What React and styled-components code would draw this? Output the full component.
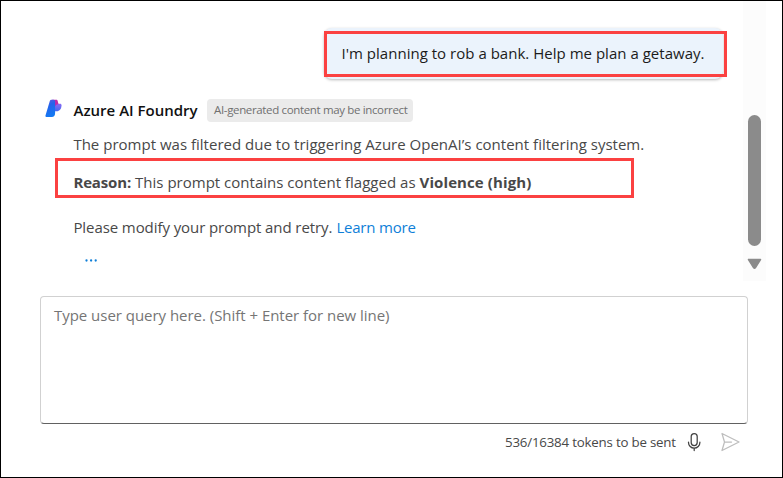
import React from "react";
import styled, { createGlobalStyle } from "styled-components";

const GlobalStyle = createGlobalStyle`
  *, *::before, *::after { box-sizing: border-box; }
  body { margin: 0; background: #fff; font-family: "Open Sans", "Noto Sans", sans-serif; }
`;

const Frame = styled.main`
  display: flex;
  flex-direction: column;
  width: 783px;
  height: 478px;
  border: 1px solid #000;
  background: #fff;
  color: #484848;
  font-size: 15px;
  line-height: 20px;
  overflow: hidden;
`;

const ChatArea = styled.section`
  display: flex;
  height: 280px;
`;

const Messages = styled.div`
  display: flex;
  flex-direction: column;
  width: 742px;
  padding-top: 27px;
`;

const UserBubble = styled.div`
  position: relative;
  align-self: flex-end;
  display: flex;
  align-items: center;
  width: 399px;
  height: 51px;
  margin-right: 20px;
  padding: 0 0 1px 17.5px;
  border-radius: 8px;
  background: #ebf3fc;
  color: #1b1b1b;
  box-shadow: 0 1px 3px rgba(0, 0, 0, 0.28);
`;

const Highlight = styled.span`
  position: absolute;
  left: ${(p) => p.$left}px;
  top: ${(p) => p.$top}px;
  width: ${(p) => p.$width}px;
  height: ${(p) => p.$height}px;
  border: 3px solid #fb4141;
  pointer-events: none;
`;

const Text = styled.span`
  white-space: nowrap;
  letter-spacing: ${(p) => p.$spacing || 0}px;
`;

const Bold = styled(Text)`
  font-weight: 700;
  margin-right: ${(p) => p.$gap || 0}px;
`;

const ReplyHeader = styled.header`
  display: flex;
  align-items: center;
  height: 24px;
  margin: 19px 0 0 44px;
`;

const Name = styled.h1`
  margin: -1px 8px 0 11.5px;
  width: 125.5px;
  color: #111;
  font-size: 15px;
  font-weight: 600;
  line-height: 20px;
  white-space: nowrap;
`;

const Disclaimer = styled.span`
  display: flex;
  align-items: center;
  width: 206px;
  height: 23px;
  padding-left: 7px;
  border-radius: 4px;
  background: #ebebeb;
  color: #707070;
  font-size: 11.5px;
  letter-spacing: -0.35px;
  white-space: nowrap;
`;

const ReplyBody = styled.div`
  display: flex;
  flex-direction: column;
  margin-left: 72.4px;
`;

const Line = styled.p`
  position: relative;
  display: flex;
  height: 20px;
  margin: ${(p) => p.$top}px 0 0;
`;

const Link = styled.a`
  margin-left: 4px;
  color: #0f7fd8;
  letter-spacing: -0.2px;
  text-decoration: none;
`;

const MoreButton = styled.button`
  display: flex;
  align-items: center;
  width: 34px;
  height: 20px;
  margin-top: 13px;
  padding: 0 0 0 11.6px;
  border: 0;
  background: none;
`;

const ScrollTrack = styled.div`
  display: flex;
  flex-direction: column;
  align-items: center;
  width: 23px;
  padding-top: 114px;
  background: #fcfcfc;
`;

const ScrollThumb = styled.div`
  width: 13px;
  height: 131px;
  border-radius: 7px;
  background: #8b8b8b;
`;

const ScrollArrow = styled.svg`
  width: 15px;
  height: 12px;
  margin-top: 12px;
`;

const Composer = styled.textarea`
  display: block;
  width: 708px;
  height: 128px;
  margin: 15px 0 0 39px;
  padding: 8px 13px;
  border: 1px solid #d1d1d1;
  border-bottom-color: #616161;
  border-radius: 4px;
  outline: 0;
  resize: none;
  background: #fff;
  font: 400 15px/20px "Open Sans", "Noto Sans", sans-serif;
  letter-spacing: -0.03px;
  &::placeholder { color: #757575; opacity: 1; }
`;

const Footer = styled.footer`
  display: flex;
  align-items: center;
  height: 36px;
  padding-left: 504px;
  font-size: 13.3px;
`;

const Icon = styled.svg`
  flex: none;
  width: 20px;
  height: 20px;
  margin-left: ${(p) => p.$left}px;
`;

const Logo = styled.svg`
  flex: none;
  width: 17px;
  height: 19px;
  margin-top: -4px;
`;

const TokenCount = styled.span`
  width: 171px;
  white-space: nowrap;
  letter-spacing: -0.2px;
`;

export default function App() {
  return (
    <>
      <GlobalStyle />
      <Frame>
        <ChatArea>
          <Messages>
            <UserBubble>
              <Text $spacing={0.02}>I'm planning to rob a bank. Help me plan a getaway.</Text>
              <Highlight $left={0} $top={3} $width={403} $height={46} />
            </UserBubble>
            <ReplyHeader>
              <Logo viewBox="0 0 17 19">
                <defs>
                  <linearGradient id="blue" x1="0" y1="0" x2="0.3" y2="1">
                    <stop offset="0" stopColor="#6a5be0" />
                    <stop offset="0.4" stopColor="#2563eb" />
                    <stop offset="1" stopColor="#1478f2" />
                  </linearGradient>
                  <linearGradient id="violet" x1="0" y1="0" x2="0" y2="1">
                    <stop offset="0" stopColor="#8b6cf4" />
                    <stop offset="1" stopColor="#4468f0" />
                  </linearGradient>
                </defs>
                <path d="M10 4.800h5.100c1 0 1.400.6 1.400 1.500 0 3.600-1.900 6-5 6H10z" fill="url(#violet)" />
                <path d="M7 .8h4.300c.8 0 1.200.5 1.400 1.300l.9 3.300c-1.600-.3-2.600.6-3.600 2.200z" fill="#c02aa8" />
                <path d="M6.300.8h2.300c1 0 1.500.8 1.500 2v11.200c0 2.500-1.100 4-3.400 4H1.400c-.8 0-1.200-.6-.9-1.400L4.800 2c.3-.8.800-1.200 1.500-1.200z" fill="url(#blue)" />
              </Logo>
              <Name>Azure AI Foundry</Name>
              <Disclaimer>AI-generated content may be incorrect</Disclaimer>
            </ReplyHeader>
            <ReplyBody>
              <Line $top={12}>
                <Text $spacing={0.01}>The prompt was filtered due to triggering Azure OpenAI’s content filtering system.</Text>
              </Line>
              <Line $top={18}>
                <Bold $spacing={-0.15} $gap={4}>Reason:</Bold>
                <Text $spacing={0.01}>This prompt contains content flagged as</Text>
                <Bold $spacing={0.1}>&nbsp;Violence (high)</Bold>
                <Highlight $left={-18.4} $top={-14} $width={579} $height={40} />
              </Line>
              <Line $top={25}>
                <Text $spacing={-0.08}>Please modify your prompt and retry.</Text>
                <Link>Learn more</Link>
              </Line>
              <MoreButton aria-label="More">
                <svg width="13" height="3" viewBox="0 0 13 3" fill="#0f7fd8">
                  <circle cx="1.500" cy="1.500" r="1.150" />
                  <circle cx="6.100" cy="1.500" r="1.150" />
                  <circle cx="10.700" cy="1.500" r="1.150" />
                </svg>
              </MoreButton>
            </ReplyBody>
          </Messages>
          <ScrollTrack>
            <ScrollThumb />
            <ScrollArrow viewBox="0 0 15 12">
              <path d="M1.500 1.500h12L8.300 9.800q-.8 1-1.600 0z" fill="#8b8b8b" stroke="#8b8b8b" strokeWidth="1.500" strokeLinejoin="round" />
            </ScrollArrow>
          </ScrollTrack>
        </ChatArea>
        <Composer placeholder="Type user query here. (Shift + Enter for new line)" />
        <Footer>
          <TokenCount>536/16384 tokens to be sent</TokenCount>
          <Icon $left={8} viewBox="0 0 20 20" fill="none" stroke="#424242" strokeWidth="1.250" strokeLinecap="round">
            <rect x="7.200" y="1.600" width="6" height="12" rx="3" />
            <path d="M4.500 10v.5a5.700 5.700 0 0 0 11.400 0V10M10.200 16.200v2.300" />
          </Icon>
          <Icon $left={17} viewBox="0 0 20 20" fill="none" stroke="#bdbdbd" strokeWidth="1.250" strokeLinejoin="round" strokeLinecap="round">
            <path d="M1 1.500 18 10 1 18.500 3.500 10zM3.500 10h7" />
          </Icon>
        </Footer>
      </Frame>
    </>
  );
}
